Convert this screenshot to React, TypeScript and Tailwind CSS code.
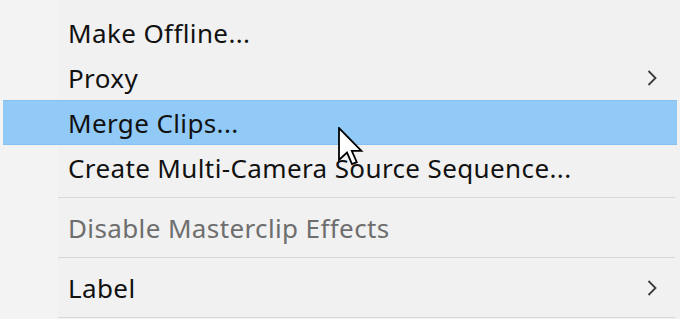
import React from "react";

const Chevron = () => (
  <svg width="12" height="18" viewBox="0 0 12 18" className="absolute right-[22px] top-1/2 -translate-y-1/2">
    <path d="M2.5 2 L9.5 9 L2.5 16" fill="none" stroke="#3a3a3a" strokeWidth="1.8" />
  </svg>
);

const Item = ({ label, highlighted, disabled, sub }: { label: string; highlighted?: boolean; disabled?: boolean; sub?: boolean }) => (
  <div
    className={
      highlighted
        ? "relative h-[45px] flex items-center bg-[#91c9f7] mx-[3px] pl-[65px] border-y border-[#86c0f0]"
        : "relative h-[45px] flex items-center pl-[68px]"
    }
  >
    <span className={`text-[26px] leading-none pt-[1px] tracking-[0.38px] ${disabled ? "text-[#6e6e6e]" : "text-[#111]"}`}>{label}</span>
    {sub && <Chevron />}
  </div>
);

const Sep = () => <div className="h-px bg-[#d8d8d8] ml-[58px] mr-[5px] my-[7px]" />;

export default function App() {
  return (
    <div className="w-[680px] h-[319px] overflow-hidden relative bg-[#f1f1f1]" style={{ fontFamily: '"Noto Sans", "Open Sans", sans-serif' }}>
      <div className="absolute left-0 top-0 bottom-0 w-[58px] bg-[#f3f3f3]" />
      <div className="relative pt-[10px]">
        <Item label="Make Offline..." />
        <Item label="Proxy" sub />
        <Item label="Merge Clips..." highlighted />
        <Item label="Create Multi-Camera Source Sequence..." />
        <Sep />
        <Item label="Disable Masterclip Effects" disabled />
        <Sep />
        <Item label="Label" sub />
        <Sep />
      </div>
      <svg className="absolute left-[338px] top-[127px]" width="26" height="40" viewBox="0 0 13 20">
        <path d="M0.5 0.5 L0.5 16.5 L4.5 12.8 L7 18.6 L9.4 17.6 L6.9 11.9 L11.7 11.9 Z" fill="#fff" stroke="#000" strokeWidth="0.9" strokeLinejoin="miter" />
      </svg>
    </div>
  );
}
